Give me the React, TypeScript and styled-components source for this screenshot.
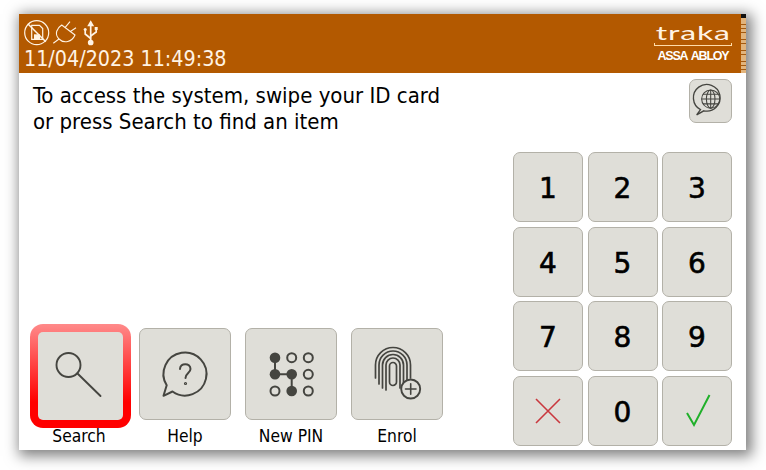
import React from 'react';
import styled, {createGlobalStyle} from 'styled-components';

const GlobalStyle = createGlobalStyle`
    html, body {
        margin: 0;
        height: 100%;
        background: #fff;
        overflow: hidden;
    }
    body {
        font-family: "DejaVu Sans Condensed", "DejaVu Sans", sans-serif;
        color: #000;
    }
    #root {
        height: 470px;
        padding-top: 14px;
        box-sizing: border-box;
    }
`

const faceColor = '#dfded8'
const iconColor = '#454540'

const SearchIcon = () => (
    <svg width="92" height="92" viewBox="0 0 92 92" fill="none" stroke={iconColor} strokeWidth="1.9" strokeLinecap="round">
        <circle cx="33.5" cy="35" r="12"/>
        <path d="M42.5 43.5 L65.5 66"/>
    </svg>
)

const HelpIcon = () => (
    <svg width="92" height="92" viewBox="0 0 92 92" fill="none" stroke={iconColor} strokeWidth="2" strokeLinecap="round" strokeLinejoin="round">
        <path d="M27.7 57.3 L24.5 67.8 L33.5 63.5 M27.7 57.3 A21.5 21.5 0 1 1 33.5 63.5"/>
        <path d="M41 41 C41 34.500 51.500 34.500 51.500 41 C51.500 45 46.500 45 46.500 50"/>
        <circle cx="46.500" cy="55.500" r="0.6"/>
    </svg>
)

const PinIcon = () => {
    const xs = [30, 46.7, 63.3]
    const ys = [29.7, 46.3, 63]
    const filled = ['0-0', '0-1', '1-1', '1-2']
    return (
        <svg width="92" height="92" viewBox="0 0 92 92" fill="none" stroke={iconColor} strokeWidth="2">
            <path d="M30 29.700 V46.300 H46.700 V63" strokeWidth="2"/>
            {ys.map((y, r) => xs.map((x, c) => (
                filled.includes(`${c}-${r}`)
                    ? <circle key={`${c}${r}`} cx={x} cy={y} r="5.300" fill={iconColor} stroke="none"/>
                    : <circle key={`${c}${r}`} cx={x} cy={y} r="4.500"/>
            )))}
        </svg>
    )
}

const EnrolIcon = () => (
    <svg width="92" height="92" viewBox="0 0 92 92" fill="none" stroke={iconColor} strokeWidth="1.7" strokeLinecap="round">
        <path d="M24.500 50 V37 A17.500 17.500 0 0 1 59.500 37 V50"/>
        <path d="M28 56 V37 A14 14 0 0 1 56 37 V52"/>
        <path d="M31.500 60 V37 A10.500 10.500 0 0 1 52.500 37 V56"/>
        <path d="M35 62 V37 A7 7 0 0 1 49 37 V60"/>
        <path d="M38.500 54 V38 A3.500 3.500 0 0 1 45.500 38 V54 A3.500 3.500 0 0 1 38.500 54"/>
        <circle cx="59.700" cy="61" r="9.500" fill={faceColor} strokeWidth="1.9"/>
        <path d="M54.500 61 H65 M59.700 55.800 V66.200" strokeWidth="1.6"/>
    </svg>
)

const LanguageIcon = () => (
    <svg width="43" height="44" viewBox="0 0 43 44" fill="none" stroke={iconColor} strokeWidth="1.1">
        <path d="M11 31 L7 36.500 L14.500 32.300 A14 14 0 1 0 11 31 Z" strokeWidth="1.4"/>
        <circle cx="21.700" cy="20" r="9.500"/>
        <ellipse cx="21.700" cy="20" rx="4.500" ry="9.500"/>
        <path d="M21.700 10.500 V29.500 M12.200 20 H31.200 M13.500 15 H30 M13.500 25 H30"/>
    </svg>
)

const CrossIcon = () => (
    <svg width="30" height="30" viewBox="0 0 30 30" fill="none" stroke="#c9383e" strokeWidth="1.6">
        <path d="M3 3 L27 27 M27 3 L3 27"/>
    </svg>
)

const TickIcon = () => (
    <svg width="30" height="36" viewBox="0 0 30 36" fill="none" stroke="#20b02a" strokeWidth="2">
        <path d="M5 20 L12 32 L27.500 2"/>
    </svg>
)

const NoCardIcon = () => (
    <svg width="26" height="26" viewBox="0 0 26 26" fill="none" stroke="#fff3e4" strokeWidth="1.2">
        <circle cx="12.700" cy="12.700" r="12"/>
        <path d="M7.700 5.300 H15.500 L18.700 8.500 V19.300 H7.700 Z"/>
        <path d="M3.800 3.800 L21.800 21.800" strokeWidth="1.500"/>
        <rect x="10" y="14.300" width="6" height="5" fill="#fff3e4" stroke="none"/>
    </svg>
)

const PlugIcon = () => (
    <svg width="26" height="26" viewBox="0 0 26 26" fill="none" stroke="#fff3e4" strokeWidth="1.1" strokeLinejoin="round">
        <path d="M9.700 5 L23 15 C20 22 12 24 7 19 C2 14 5 8 9.700 5 Z"/>
        <path d="M7 19 L1.300 23.300 M13 7.700 L18 1.700 M18 11.700 L24 7.700"/>
    </svg>
)

const UsbIcon = () => (
    <svg width="21" height="26" viewBox="0 0 21 26" fill="none" stroke="#fff3e4" strokeWidth="1.7">
        <path d="M10.700 4 V22"/>
        <path d="M10.700 2 L12.700 5.500 H8.700 Z" fill="#fff3e4"/>
        <circle cx="10.700" cy="22.500" r="2" fill="#fff3e4"/>
        <path d="M10.700 18.500 L5.200 14 V10.500 M10.700 16 L16.200 12 V9.500"/>
        <circle cx="5.200" cy="9.500" r="1.500" fill="#fff3e4" stroke="none"/>
        <rect x="14.700" y="7" width="3" height="3" fill="#fff3e4" stroke="none"/>
    </svg>
)

const keys: {label: React.ReactNode, id: string}[] = [
    {id: '1', label: '1'}, {id: '2', label: '2'}, {id: '3', label: '3'},
    {id: '4', label: '4'}, {id: '5', label: '5'}, {id: '6', label: '6'},
    {id: '7', label: '7'}, {id: '8', label: '8'}, {id: '9', label: '9'},
    {id: 'cancel', label: <CrossIcon/>}, {id: '0', label: '0'}, {id: 'ok', label: <TickIcon/>},
]

const tools = [
    {label: 'Search', icon: <SearchIcon/>, selected: true},
    {label: 'Help', icon: <HelpIcon/>, selected: false},
    {label: 'New PIN', icon: <PinIcon/>, selected: false},
    {label: 'Enrol', icon: <EnrolIcon/>, selected: false},
]

const App: React.FC = () => {
    return (
        <>
            <GlobalStyle/>
            <Screen>
                <Header>
                    <Status>
                        <StatusIcons>
                            <NoCardIcon/>
                            <PlugIcon/>
                            <UsbIcon/>
                        </StatusIcons>
                        <DateTime>11/04/2023 11:49:38</DateTime>
                    </Status>
                    <Logo>
                        <LogoName>traka</LogoName>
                        <LogoRule/>
                        <LogoOwner>ASSA ABLOY</LogoOwner>
                    </Logo>
                    <Strip/>
                </Header>
                <Main>
                    <LeftColumn>
                        <Prompt>
                            To access the system, swipe your ID card<br/>
                            or press Search to find an item
                        </Prompt>
                        <ToolRow>
                            {tools.map(tool => (
                                <Tool key={tool.label}>
                                    <ToolFace $selected={tool.selected}>{tool.icon}</ToolFace>
                                    <ToolLabel>{tool.label}</ToolLabel>
                                </Tool>
                            ))}
                        </ToolRow>
                    </LeftColumn>
                    <RightColumn>
                        <LanguageButton><LanguageIcon/></LanguageButton>
                        <Keypad>
                            {keys.map(key => <Key key={key.id}>{key.label}</Key>)}
                        </Keypad>
                    </RightColumn>
                </Main>
            </Screen>
        </>
    )
}

export default App

const Screen = styled.div`
    width: 727px;
    height: 436px;
    margin-left: 19px;
    display: flex;
    flex-direction: column;
    background: #fff;
    box-shadow: 3px 3px 13px 3px rgba(0, 0, 0, 0.5);
`
const Header = styled.header`
    height: 59px;
    flex: none;
    display: flex;
    justify-content: space-between;
    background: #b35900;
    color: #fff;
`
const Status = styled.div`
    display: flex;
    flex-direction: column;
    padding: 5px 0 0 5px;
`
const StatusIcons = styled.div`
    display: flex;
    align-items: center;
    gap: 2px;
    height: 27px;
`
const DateTime = styled.div`
    font-size: 21.3px;
    line-height: 26px;
    color: #fff3e4;
`
const Logo = styled.div`
    width: 78px;
    margin-left: auto;
    margin-right: 9px;
    padding-top: 9px;
    display: flex;
    flex-direction: column;
    align-items: center;
`
const LogoName = styled.div`
    font-family: "Lato", sans-serif;
    font-weight: 400;
    font-size: 19px;
    line-height: 20px;
    letter-spacing: 0.5px;
    transform: scaleX(1.68);
    color: #fff3e4;
`
const LogoRule = styled.div`
    box-sizing: border-box;
    width: 78px;
    height: 3px;
    border: 1px solid #ffdca8;
    border-top: 0;
`
const LogoOwner = styled.div`
    font-family: "Liberation Sans", sans-serif;
    font-weight: 700;
    font-size: 12.5px;
    line-height: 16px;
    letter-spacing: -1.2px;
    word-spacing: 2px;
    margin-top: 2px;
`
const Strip = styled.div`
    width: 5px;
    background:
        linear-gradient(#111, #111) top / 100% 4px no-repeat,
        repeating-linear-gradient(#e2b47c 0 3px, #a3590f 3px 3.700px);
`
const Main = styled.main`
    flex: 1;
    display: flex;
    justify-content: space-between;
    padding: 0 14px 4px;
    min-height: 0;
`
const LeftColumn = styled.div`
    display: flex;
    flex-direction: column;
    justify-content: space-between;
`
const Prompt = styled.p`
    margin: 10px 0 0;
    font-size: 22px;
    line-height: 26px;
`
const ToolRow = styled.div`
    display: flex;
    gap: 14px;
`
const Tool = styled.div`
    width: 92px;
    display: flex;
    flex-direction: column;
    align-items: center;
`
const ToolFace = styled.div<{$selected: boolean}>`
    display: flex;
    align-items: center;
    justify-content: center;
    box-sizing: border-box;
    flex: none;
    width: ${p => (p.$selected ? '101px' : '92px')};
    height: ${p => (p.$selected ? '104px' : '92px')};
    margin: ${p => (p.$selected ? '0 -6px -8px -3px' : '4px 0 0')};
    border-radius: ${p => (p.$selected ? '13px' : '7px')};
    border: ${p => (p.$selected ? '8px solid transparent' : '1.5px solid #b3b1a8')};
    background: ${p => (p.$selected
        ? `linear-gradient(${faceColor}, ${faceColor}) padding-box, linear-gradient(#ff8a8a, #ff0000 75%) border-box`
        : faceColor)};
    svg {
        flex: none;
    }
`
const ToolLabel = styled.div`
    margin-top: 6px;
    font-size: 17.3px;
    line-height: 20px;
`
const RightColumn = styled.div`
    display: flex;
    flex-direction: column;
    align-items: flex-end;
    justify-content: space-between;
    padding-top: 6px;
`
const LanguageButton = styled.div`
    width: 43px;
    height: 44px;
    box-sizing: border-box;
    display: flex;
    align-items: center;
    justify-content: center;
    border: 1.5px solid #b3b1a8;
    border-radius: 7px;
    background: ${faceColor};
`
const Keypad = styled.div`
    display: grid;
    grid-template-columns: repeat(3, 70px);
    grid-auto-rows: 70px;
    row-gap: 4.670px;
    column-gap: 4.500px;
`
const Key = styled.div`
    box-sizing: border-box;
    display: flex;
    align-items: center;
    justify-content: center;
    padding-top: 3px;
    border: 1.5px solid #b3b1a8;
    border-radius: 7px;
    background: ${faceColor};
    font-family: "DejaVu Sans", sans-serif;
    font-size: 28px;
    -webkit-text-stroke: 0.6px #000;
    svg {
        margin-top: -3px;
    }
`
